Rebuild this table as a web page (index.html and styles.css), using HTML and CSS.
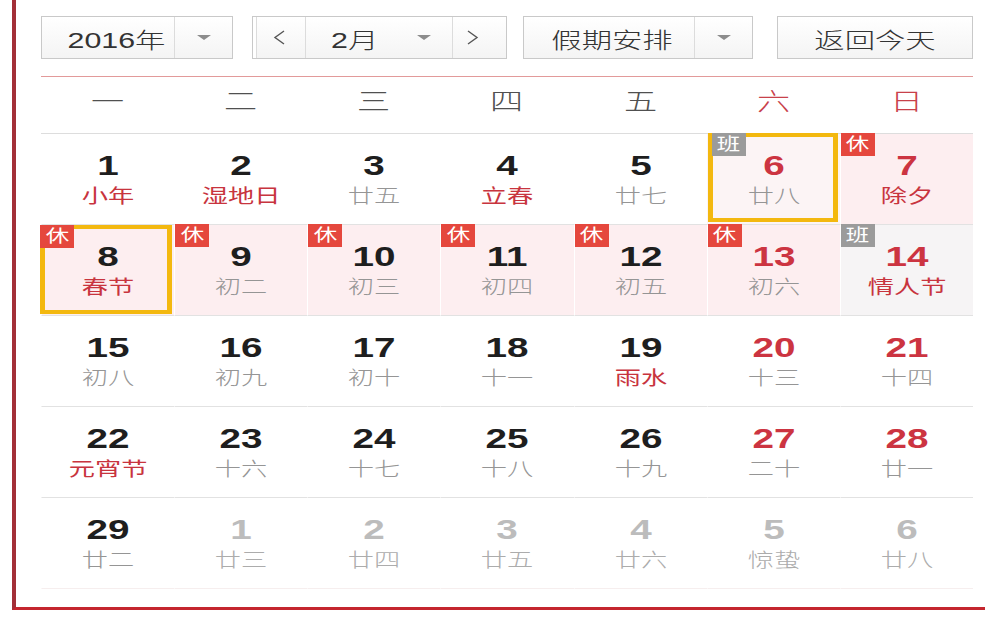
FILE: index.html
```html
<!DOCTYPE html>
<html lang="zh-CN">
<head>
<meta charset="utf-8">
<title>万年历</title>
<link rel="stylesheet" href="styles.css">
</head>
<body>
<div class="frame">
  <div class="toolbar">
    <div class="sel year">
      <div class="sel-text"><span class="wide">2016年</span></div>
      <div class="sel-arrow"><i class="caret"></i></div>
    </div>
    <div class="sel month">
      <div class="nav prev"><svg width="13" height="15" viewBox="0 0 13 15"><polyline points="11,1 2,7.5 11,14" fill="none" stroke="#555" stroke-width="1.4"/></svg></div>
      <div class="month-label"><span class="wide left">2月</span><i class="caret"></i></div>
      <div class="nav next"><svg width="13" height="15" viewBox="0 0 13 15"><polyline points="2,1 11,7.5 2,14" fill="none" stroke="#555" stroke-width="1.4"/></svg></div>
    </div>
    <div class="sel holiday">
      <div class="sel-text hol-text"><span class="wide">假期安排</span></div>
      <div class="sel-arrow"><i class="caret"></i></div>
    </div>
    <div class="sel today-btn"><span class="wide">返回今天</span></div>
  </div>

  <div class="weekdays">
    <div>一</div><div>二</div><div>三</div><div>四</div><div>五</div><div class="we">六</div><div class="we">日</div>
  </div>

  <div class="grid">
    <div class="day"><div class="num">1</div><div class="lunar fest">小年</div></div>
    <div class="day"><div class="num">2</div><div class="lunar fest">湿地日</div></div>
    <div class="day"><div class="num">3</div><div class="lunar">廿五</div></div>
    <div class="day"><div class="num">4</div><div class="lunar fest">立春</div></div>
    <div class="day"><div class="num">5</div><div class="lunar">廿七</div></div>
    <div class="day work sel-day r1"><span class="badge ban"><span class="wide">班</span></span><div class="num red">6</div><div class="lunar">廿八</div></div>
    <div class="day rest"><span class="badge xiu"><span class="wide">休</span></span><div class="num red">7</div><div class="lunar fest">除夕</div></div>

    <div class="day rest sel-day r2"><span class="badge xiu"><span class="wide">休</span></span><div class="num">8</div><div class="lunar fest">春节</div></div>
    <div class="day rest"><span class="badge xiu"><span class="wide">休</span></span><div class="num">9</div><div class="lunar">初二</div></div>
    <div class="day rest"><span class="badge xiu"><span class="wide">休</span></span><div class="num">10</div><div class="lunar">初三</div></div>
    <div class="day rest"><span class="badge xiu"><span class="wide">休</span></span><div class="num">11</div><div class="lunar">初四</div></div>
    <div class="day rest"><span class="badge xiu"><span class="wide">休</span></span><div class="num">12</div><div class="lunar">初五</div></div>
    <div class="day rest"><span class="badge xiu"><span class="wide">休</span></span><div class="num red">13</div><div class="lunar">初六</div></div>
    <div class="day work grey"><span class="badge ban"><span class="wide">班</span></span><div class="num red">14</div><div class="lunar fest">情人节</div></div>

    <div class="day"><div class="num">15</div><div class="lunar">初八</div></div>
    <div class="day"><div class="num">16</div><div class="lunar">初九</div></div>
    <div class="day"><div class="num">17</div><div class="lunar">初十</div></div>
    <div class="day"><div class="num">18</div><div class="lunar">十一</div></div>
    <div class="day"><div class="num">19</div><div class="lunar fest">雨水</div></div>
    <div class="day"><div class="num red">20</div><div class="lunar">十三</div></div>
    <div class="day"><div class="num red">21</div><div class="lunar">十四</div></div>

    <div class="day"><div class="num">22</div><div class="lunar fest">元宵节</div></div>
    <div class="day"><div class="num">23</div><div class="lunar">十六</div></div>
    <div class="day"><div class="num">24</div><div class="lunar">十七</div></div>
    <div class="day"><div class="num">25</div><div class="lunar">十八</div></div>
    <div class="day"><div class="num">26</div><div class="lunar">十九</div></div>
    <div class="day"><div class="num red">27</div><div class="lunar">二十</div></div>
    <div class="day"><div class="num red">28</div><div class="lunar">廿一</div></div>

    <div class="day last"><div class="num">29</div><div class="lunar">廿二</div></div>
    <div class="day last other"><div class="num">1</div><div class="lunar">廿三</div></div>
    <div class="day last other"><div class="num">2</div><div class="lunar">廿四</div></div>
    <div class="day last other"><div class="num">3</div><div class="lunar">廿五</div></div>
    <div class="day last other"><div class="num">4</div><div class="lunar">廿六</div></div>
    <div class="day last other"><div class="num">5</div><div class="lunar">惊蛰</div></div>
    <div class="day last other"><div class="num">6</div><div class="lunar">廿八</div></div>
  </div>
</div>
</body>
</html>
```
FILE: styles.css
```css
html, body {
  margin: 0;
  padding: 0;
  background: #fff;
}
body {
  font-family: "Liberation Sans", "Noto Sans CJK SC", sans-serif;
  overflow: hidden;
  color: #333;
}
.frame {
  margin-left: 12px;
  height: 610px;
  box-sizing: border-box;
  border-left: 4px solid #a32f38;
  border-bottom: 3px solid #c4262e;
  padding: 16px 12px 0 25px;
}
.wide {
  display: inline-block;
  transform: scaleX(1.38);
}
.wide.left { transform-origin: left center; }

/* toolbar */
.toolbar {
  display: flex;
  height: 43px;
}
.sel {
  display: flex;
  box-sizing: border-box;
  height: 43px;
  border: 1px solid #c9c9c9;
  background: linear-gradient(#ffffff, #f4f4f4);
  font-size: 22px;
  font-weight: 300;
  color: #333;
}
.sel-text {
  flex: 1;
  display: flex;
  align-items: center;
  justify-content: center;
  padding-left: 16px;
}
.sel-arrow {
  width: 57px;
  border-left: 1px solid #dcdcdc;
  display: flex;
  align-items: center;
  justify-content: center;
}
.caret {
  display: block;
  width: 0;
  height: 0;
  border-left: 7px solid transparent;
  border-right: 7px solid transparent;
  border-top: 5px solid #8c8c8c;
}
.year { width: 192px; }
.month { width: 255px; margin-left: 19px; }
.nav {
  display: flex;
  align-items: center;
  justify-content: center;
}
.prev { width: 52px; border-right: 1px solid #dcdcdc; box-shadow: inset 3px 0 0 #fff, inset 4px 0 0 #dcdcdc; }
.next { width: 54px; border-left: 1px solid #dcdcdc; padding-right: 14px; box-sizing: border-box; }
.month-label {
  flex: 1;
  display: flex;
  align-items: center;
  justify-content: space-between;
  padding: 0 21px 0 25px;
}
.holiday { width: 230px; margin-left: 16px; }
.hol-text { padding-left: 6px; }
.today-btn {
  width: 196px;
  margin-left: auto;
  align-items: center;
  justify-content: center;
}

/* weekday header */
.weekdays {
  margin-top: 17px;
  height: 56px;
  box-sizing: content-box;
  border-top: 1px solid #e29a9a;
  border-bottom: 1px solid #dddddd;
  display: grid;
  grid-template-columns: repeat(7, 1fr);
  font-size: 24px;
  font-weight: 300;
  line-height: 24px;
  color: #505050;
  text-align: center;
}
.weekdays > div {
  padding-top: 13px;
  transform: scaleX(1.38);
}
.weekdays .we { color: #c8414a; }

/* day grid */
.grid {
  display: grid;
  grid-template-columns: repeat(7, 1fr);
}
.day {
  position: relative;
  height: 91px;
  box-sizing: border-box;
  padding-top: 16px;
  border-bottom: 1px solid #e2e2e2;
  border-left: 1px solid transparent;
  text-align: center;
}
.day.last { border-bottom-color: #f6eeee; }
.num {
  font-size: 28px;
  font-weight: bold;
  line-height: 32px;
  color: #1e1e1e;
  transform: scaleX(1.38);
}
.num.red { color: #cc3441; }
.lunar {
  margin-top: 2px;
  font-size: 19px;
  font-weight: 300;
  line-height: 26px;
  color: #959595;
  transform: scaleX(1.38);
}
.lunar.fest { color: #c8343e; font-weight: 400; }
.other .num { color: #bcbcbc; }
.other .lunar { color: #acacac; }

.rest { background: #fdeef0; border-left-color: #fff; }
.work { background: #fcf4f5; }
.grey { background: #f6f4f5; border-left-color: #fff; }

.sel-day::after {
  content: "";
  position: absolute;
  box-sizing: border-box;
  border-style: solid;
  border-color: #f3b80f;
  border-width: 4px 5px;
  z-index: 1;
}
.sel-day.r1::after { left: 0; right: 2px; top: -1px; bottom: 2px; }
.sel-day.r2::after { left: -2px; right: 2px; top: 0; bottom: 1px; }

.badge {
  position: absolute;
  top: -1px;
  left: 0;
  z-index: 2;
  width: 34px;
  height: 23px;
  font-size: 17px;
  line-height: 23px;
  color: #fff;
  text-align: center;
}
.badge.xiu { background: #e5473d; }
.badge.ban { background: #9b9b9b; }
.r2 .badge { left: -2px; top: 0; }
.r1 .badge { left: 4px; }
```
